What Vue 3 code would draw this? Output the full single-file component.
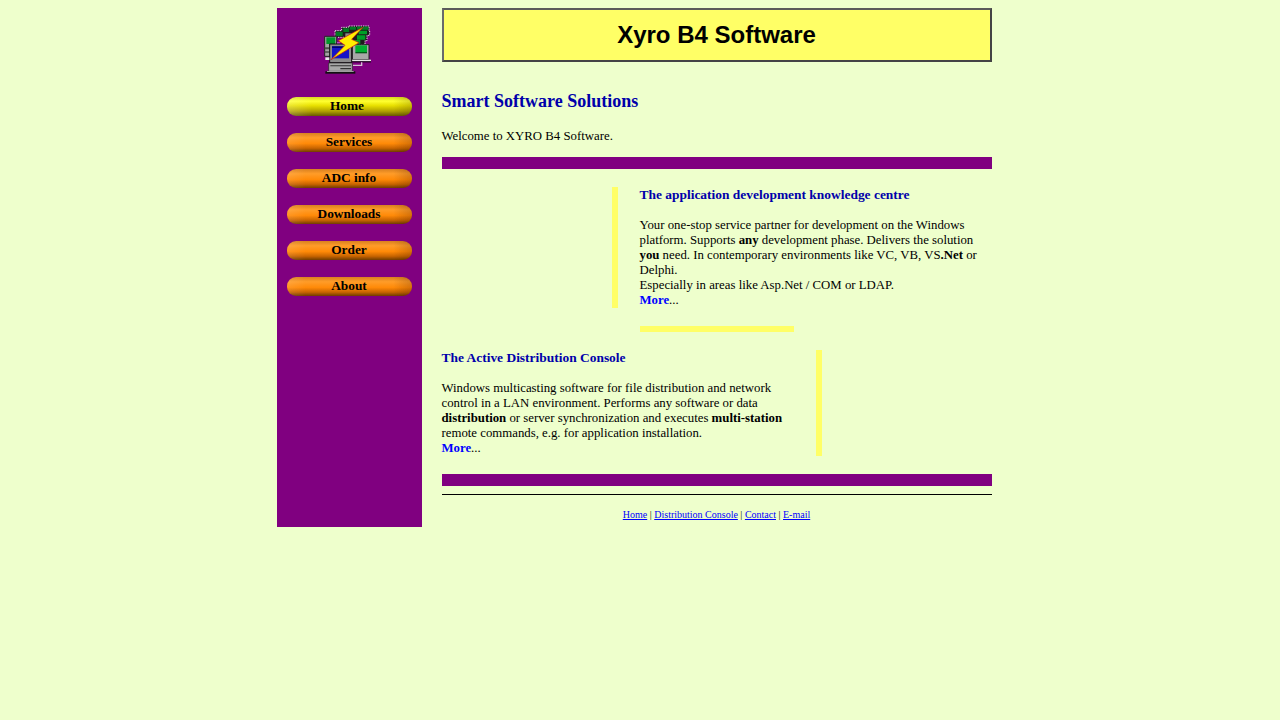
<script setup>
const navItems = [
  { label: 'Home', active: true },
  { label: 'Services' },
  { label: 'ADC info' },
  { label: 'Downloads' },
  { label: 'Order' },
  { label: 'About' },
]
const footerLinks = ['Home', 'Distribution Console', 'Contact', 'E-mail']
</script>

<template>
  <div class="page">
    <aside class="sidebar">
      <svg class="logo" width="50" height="50" viewBox="138 51 150 150">
        <!-- back row of monitors -->
        <path d="M174 68h20v-10h20v-4h62v14h2v14h-8v16h-6v12h-30v-4h-30v-18h-30z" fill="#1c1c1c" stroke="#e4e4e4" stroke-width="3" stroke-dasharray="4 3" />
        <path d="M177 71h20v13h-20zM199 61h17v11h-17zM218 57h19v8h-19zM240 56h34v9h-34z" fill="#007c22" />
        <path d="M245 68h25v11h-25zM240 82h25v13h-25zM225 96h25v11h-25z" fill="#00a028" />
        <path d="M205 76h20v14h-20z" fill="#8a8a8a" />
        <!-- left monitor -->
        <path d="M143 85h36v60h-36z" fill="#a4a4a4" stroke="#222" stroke-width="3" />
        <path d="M148 88h27v20h-27z" fill="#00962a" />
        <path d="M143 118h24v6h-24zM143 130h24v4h-24z" fill="#4c4c4c" />
        <path d="M180 102h10v8h-10z" fill="#c040c0" />
        <!-- right monitor -->
        <path d="M226 110h50v45h-50z" fill="#a8a8a8" stroke="#222" stroke-width="3" />
        <path d="M235 112h35v20h-35z" fill="#00b030" />
        <path d="M235 132h35v4h-35z" fill="#005c18" />
        <path d="M222 155h60v5h-60z" fill="#e8e8e8" />
        <path d="M222 160h60v3h-60z" fill="#000" />
        <path d="M228 172h26v-9" fill="none" stroke="#d4bcd4" stroke-width="4" />
        <!-- middle monitor -->
        <path d="M158 108h66v56h-66z" fill="#8c8c8c" stroke="#111" stroke-width="3" />
        <path d="M165 115h51v36h-51z" fill="#1414c8" />
        <path d="M165 115h51v5h-51z" fill="#000070" />
        <path d="M155 165h71v25h-71z" fill="#a8a8a8" stroke="#222" stroke-width="2" />
        <path d="M160 172h62v3h-62zM190 180h32v4h-32z" fill="#333" />
        <path d="M145 190h90v7h-90z" fill="#111" />
        <path d="M150 190h80v2h-80z" fill="#e0e0e0" />
        <path d="M145 148h12v8h-12z" fill="#e8e8e8" />
        <!-- bolt -->
        <path d="M258 58 184 98 204 112 162 155 246 104 224 94z" fill="#ffee00" stroke="#c81010" stroke-width="2" stroke-linejoin="round" />
      </svg>
      <nav class="nav">
        <a v-for="item in navItems" :key="item.label" class="nav-btn" :class="{ active: item.active }" href="#">{{ item.label }}</a>
      </nav>
    </aside>

    <main class="content">
      <h1 class="title">Xyro B4 Software</h1>
      <h2 class="heading">Smart Software Solutions</h2>
      <p class="welcome">Welcome to XYRO B4 Software.</p>
      <div class="bar"></div>

      <section class="block right">
        <div class="block-text">
          <h3>The application development knowledge centre</h3>
          <p>Your one-stop service partner for development on the Windows platform. Supports <b>any</b> development phase. Delivers the solution <b>you</b> need. In contemporary environments like VC, VB, VS<b>.Net</b> or Delphi.<br />Especially in areas like Asp.Net / COM or LDAP.<br /><a href="#"><b>More</b></a>...</p>
        </div>
      </section>
      <div class="divider"></div>

      <section class="block left">
        <div class="block-text">
          <h3>The Active Distribution Console</h3>
          <p>Windows multicasting software for file distribution and network control in a LAN environment. Performs any software or data <b>distribution</b> or server synchronization and executes <b>multi-station</b> remote commands, e.g. for application installation.<br /><a href="#"><b>More</b></a>...</p>
        </div>
      </section>

      <div class="bar bottom"></div>
      <hr class="rule" />
      <footer class="footer">
        <template v-for="(link, i) in footerLinks" :key="link">
          <a href="#">{{ link }}</a><span v-if="i < footerLinks.length - 1"> | </span>
        </template>
      </footer>
    </main>
  </div>
</template>

<style>
html, body {
  margin: 0;
  background: #eeffcc;
}
</style>

<style scoped>
.page {
  display: flex;
  align-items: flex-start;
  gap: 20px;
  width: 715px;
  margin: 0 auto;
  padding: 8px 12px 0 0;
  font-family: "Liberation Serif", serif;
  font-size: 12.8px;
  line-height: 15px;
  color: #000;
}
.sidebar {
  flex: none;
  width: 145px;
  height: 519px;
  background: #800080;
  display: flex;
  flex-direction: column;
  align-items: center;
}
.logo {
  margin: 17px 0 22px -3px;
}
.nav {
  display: flex;
  flex-direction: column;
  gap: 17px;
}
.nav-btn {
  display: block;
  width: 125px;
  height: 19px;
  border-radius: 9px;
  background:
    linear-gradient(90deg, rgba(255, 255, 255, 0.1), transparent 15%, transparent 85%, rgba(60, 20, 0, 0.22)),
    linear-gradient(#d88020 0, #ff9c28 25%, #ff8a08 55%, #c86400 80%, #703c00 100%);
  color: #000;
  font-size: 13.33px;
  font-weight: bold;
  line-height: 18px;
  text-align: center;
  text-decoration: none;
}
.nav-btn.active {
  width: 121px;
  padding-right: 4px;
  background:
    linear-gradient(90deg, rgba(255, 255, 255, 0.2), transparent 20%, transparent 85%, rgba(60, 40, 0, 0.2)),
    linear-gradient(#d8d820 0, #ffff30 22%, #e8e000 45%, #b0a000 75%, #685800 100%);
}
.content {
  width: 550px;
}
.title {
  margin: 0;
  height: 50px;
  border: 2px solid;
  border-color: #5a5a5a #444 #444 #6a6a6a;
  background: #ffff66;
  font: bold 24px/50px "Liberation Sans", sans-serif;
  text-align: center;
}
.heading {
  margin: 28px 0 0;
  color: #0000aa;
  font-size: 18px;
  line-height: 22px;
}
.welcome {
  margin: 17px 0 0;
}
.bar {
  height: 12px;
  margin-top: 13px;
  background: #800080;
}
.block {
  display: flex;
  margin-top: 18px;
}
.block.right {
  padding-left: 170px;
}
.block.right .block-text {
  border-left: 6px solid #ffff66;
  padding-left: 22px;
}
.block.left .block-text {
  width: 354px;
  padding-right: 20px;
}
.block.left::after {
  content: "";
  width: 6px;
  background: #ffff66;
}
.block h3 {
  margin: 0 0 16px;
  color: #0000aa;
  font-size: 13.44px;
  line-height: 15px;
}
.block p {
  margin: 0;
}
.block a {
  color: #0000ff;
  text-decoration: none;
}
.divider {
  width: 154px;
  height: 6px;
  margin: 18px 0 0 198px;
  background: #ffff66;
}
.bar.bottom {
  margin-top: 18px;
}
.rule {
  height: 1px;
  margin: 8px 0 0;
  border: 0;
  background: #000;
}
.footer {
  margin-top: 14px;
  font-size: 10px;
  line-height: 12px;
  text-align: center;
}
.footer a {
  color: #0000ff;
}
</style>
